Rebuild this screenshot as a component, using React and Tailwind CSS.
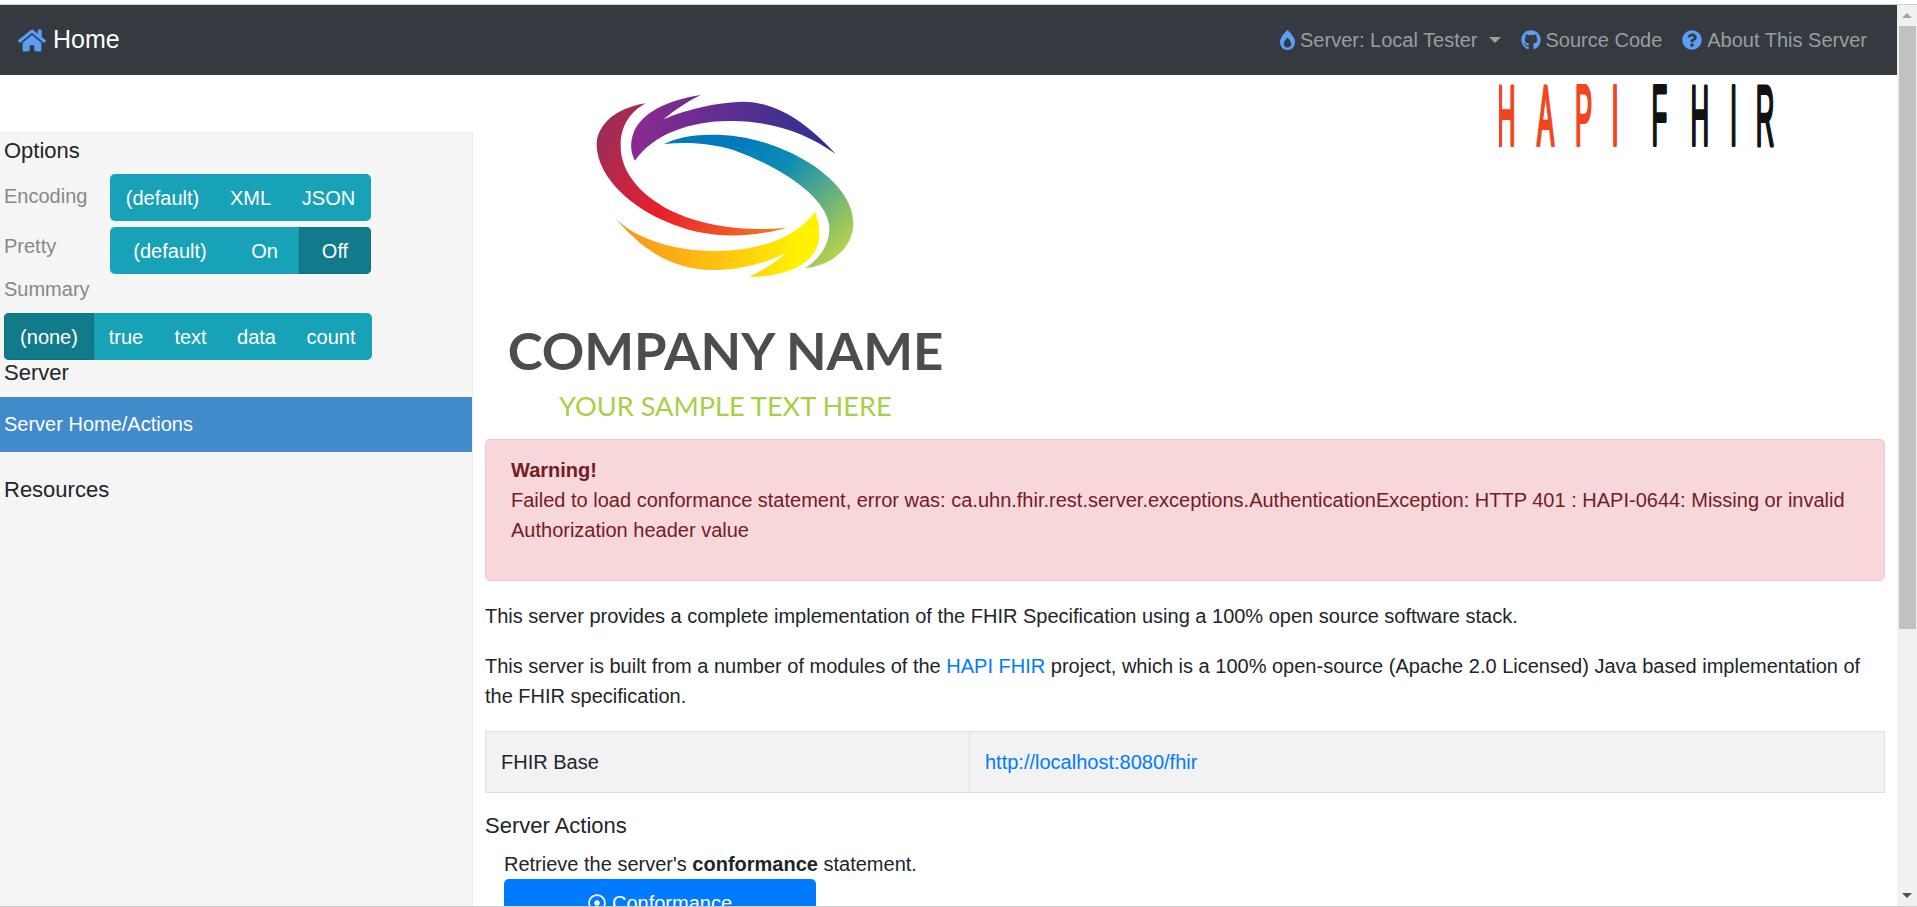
import { FaHome, FaBurn, FaGithub, FaQuestionCircle, FaRegDotCircle } from "react-icons/fa";

function Logo() {
  return (
    <svg width="475" height="364" viewBox="15 15 1425 1092" className="shrink-0">
      <defs>
        <linearGradient id="purple" gradientUnits="userSpaceOnUse" x1="470" y1="180" x2="1040" y2="200">
          <stop offset="0" stopColor="#8a2a91" />
          <stop offset="1" stopColor="#2e3192" />
        </linearGradient>
        <linearGradient id="red" gradientUnits="userSpaceOnUse" x1="370" y1="170" x2="900" y2="500">
          <stop offset="0" stopColor="#9d2c57" />
          <stop offset="0.45" stopColor="#e91f2b" />
          <stop offset="1" stopColor="#f57c20" />
        </linearGradient>
        <linearGradient id="yellow" gradientUnits="userSpaceOnUse" x1="420" y1="500" x2="960" y2="530">
          <stop offset="0" stopColor="#f7941d" />
          <stop offset="0.55" stopColor="#ffc20e" />
          <stop offset="1" stopColor="#fff200" />
        </linearGradient>
        <linearGradient id="teal" gradientUnits="userSpaceOnUse" x1="780" y1="190" x2="1110" y2="520">
          <stop offset="0" stopColor="#0079bf" />
          <stop offset="0.35" stopColor="#0c8cb5" />
          <stop offset="1" stopColor="#b7d24a" />
        </linearGradient>
      </defs>
      <path
        fill="url(#purple)"
        d="M465 272C450 245 450 215 462 185C485 130 560 90 663 75C620 95 585 120 550 148C600 125 700 97 790 95C900 97 990 170 1067 252C980 190 880 155 760 153C640 150 520 190 465 272Z"
      />
      <path
        fill="url(#red)"
        d="M497 100C400 115 350 170 350 225C352 330 470 420 560 455C650 495 770 515 920 473C800 485 680 470 590 430C490 385 420 310 422 225C422 170 450 125 497 100Z"
      />
      <path
        fill="url(#yellow)"
        d="M405 443C470 520 560 600 700 600C770 600 860 580 920 548C890 575 850 600 808 620C900 622 1020 590 1018 490C1018 465 1012 445 1005 425C960 490 860 540 720 543C590 545 470 510 405 443Z"
      />
      <path
        fill="url(#teal)"
        d="M552 222C620 185 760 185 860 220C1000 265 1120 360 1120 460C1120 530 1060 585 975 595C1030 560 1050 510 1048 470C1040 380 900 290 760 240C690 218 620 215 552 222Z"
      />
      <text
        x="83"
        y="900"
        fontFamily="Lato, sans-serif"
        fontWeight="700"
        fontSize="156"
        fill="#4d4d4f"
        textLength="1307"
        lengthAdjust="spacingAndGlyphs"
      >
        COMPANY NAME
      </text>
      <text
        x="237"
        y="1038"
        fontFamily="Lato, sans-serif"
        fontSize="80"
        fill="#a9cf46"
        textLength="998"
        lengthAdjust="spacingAndGlyphs"
      >
        YOUR SAMPLE TEXT HERE
      </text>
    </svg>
  );
}

function HapiLogo() {
  return (
    <svg width="386" height="90" viewBox="0 0 386 90" className="shrink-0">
      <g
        transform="scale(0.3 1)"
        fontFamily="Liberation Sans, sans-serif"
        fontSize="86"
        strokeWidth="3"
        strokeLinejoin="round"
      >
        <text x="-7 127 253 375" y="70" fill="#f2441d" stroke="#f2441d" vectorEffect="non-scaling-stroke">
          HAPI
        </text>
        <text x="508 638 770 856" y="70" fill="#111111" stroke="#111111" vectorEffect="non-scaling-stroke">
          FHIR
        </text>
      </g>
    </svg>
  );
}

function BtnGroup({ items, active }) {
  return (
    <div className="flex h-[47px] rounded-[5px] overflow-hidden bg-[#17a2b8] text-white text-[20px] leading-[30px]">
      {items.map((item) => (
        <div
          key={item.label}
          className={
            item.label === active
              ? `flex items-center justify-center bg-[#117a8b] border border-[#10707f] ${item.cls}`
              : `flex items-center justify-center ${item.cls}`
          }
        >
          {item.label}
        </div>
      ))}
    </div>
  );
}

function NavLink({ icon, children }) {
  return (
    <div className="flex items-center gap-[5px] px-[10px] text-[20px] text-[#9a9da0]">
      <span className="text-[#5a9ef8] text-[20px]">{icon}</span>
      {children}
    </div>
  );
}

function Sidebar() {
  return (
    <aside className="w-[473px] shrink-0 mt-[56px] bg-[#f5f5f5] border-r border-[#eeeeee] text-[#212529]">
      <div className="pl-1 text-[22px] leading-[33px] h-[43px] pt-[3px]">Options</div>
      <div className="flex pl-1 h-[53px]">
        <div className="w-[106px] text-[20px] leading-[30px] pt-[7px] text-[#888888]">Encoding</div>
        <div className="w-[261px]">
          <BtnGroup
            items={[
              { label: "(default)", cls: "w-[105px]" },
              { label: "XML", cls: "w-[71px]" },
              { label: "JSON", cls: "w-[85px]" },
            ]}
          />
        </div>
      </div>
      <div className="flex pl-1 h-[47px]">
        <div className="w-[106px] text-[20px] leading-[30px] pt-[4px] text-[#888888]">Pretty</div>
        <div className="w-[261px]">
          <BtnGroup
            active="Off"
            items={[
              { label: "(default)", cls: "w-[120px]" },
              { label: "On", cls: "w-[69px]" },
              { label: "Off", cls: "w-[72px]" },
            ]}
          />
        </div>
      </div>
      <div className="pl-1 text-[20px] leading-[30px] text-[#888888] mb-[9px]">Summary</div>
      <div className="pl-1 w-[372px]">
        <BtnGroup
          active="(none)"
          items={[
            { label: "(none)", cls: "w-[90px]" },
            { label: "true", cls: "w-[64px]" },
            { label: "text", cls: "w-[65px]" },
            { label: "data", cls: "w-[67px]" },
            { label: "count", cls: "w-[82px]" },
          ]}
        />
      </div>
      <div className="pl-1 text-[22px] leading-[26px] mb-[11px]">Server</div>
      <div className="h-[55px] flex items-center pl-1 pb-[2px] bg-[#428bca] text-white text-[20px]">Server Home/Actions</div>
      <div className="pl-1 mt-[21px] text-[22px] leading-[33px]">Resources</div>
    </aside>
  );
}

function Main() {
  return (
    <main className="flex-1 min-w-0 px-[12px] text-[20px] leading-[30px] text-[#212529]">
      <div className="flex justify-between h-[364px]">
        <Logo />
        <HapiLogo />
      </div>
      <div className="rounded-[5px] border border-[#f5c6cb] bg-[#f8d7da] text-[#721c24] px-[25px] py-[15px] mb-[20px]">
        <div className="font-bold">Warning!</div>
        <p className="mb-[20px]">
          Failed to load conformance statement, error was: ca.uhn.fhir.rest.server.exceptions.AuthenticationException:
          HTTP 401 : HAPI-0644: Missing or invalid Authorization header value
        </p>
      </div>
      <p className="mb-[20px]">
        This server provides a complete implementation of the FHIR Specification using a 100% open source software stack.
      </p>
      <p className="mb-[20px]">
        This server is built from a number of modules of the <span className="text-[#007bff]">HAPI FHIR</span> project,
        which is a 100% open-source (Apache 2.0 Licensed) Java based implementation of the FHIR specification.
      </p>
      <div className="flex h-[62px] border border-[#dee2e6] bg-[#f2f2f2] mb-[16px]">
        <div className="w-[484px] px-[15px] py-[15px] border-r border-[#dee2e6]">FHIR Base</div>
        <div className="flex-1 px-[15px] py-[15px] text-[#007bff]">http://localhost:8080/fhir</div>
      </div>
      <div className="text-[22px] leading-[33px] mb-[7px]">Server Actions</div>
      <div className="pl-[19px]">
        <div className="h-[30px]">
          Retrieve the server's <b>conformance</b> statement.
        </div>
        <div className="w-[312px] h-[47px] rounded-[5px] bg-[#007bff] text-white flex items-center justify-center gap-[6px]">
          <FaRegDotCircle className="text-[18px]" />
          Conformance
        </div>
      </div>
    </main>
  );
}

function ScrollBar() {
  return (
    <div className="w-[20px] shrink-0 bg-[#f1f1f1] flex flex-col items-start">
      <div className="h-[21px] w-[20px] flex items-center justify-center">
        <div className="w-0 h-0 border-x-[5px] border-x-transparent border-b-[5px] border-b-[#a3a3a3]" />
      </div>
      <div className="ml-[2px] w-[17px] h-[603px] bg-[#c1c1c1]" />
      <div className="mt-auto h-[21px] w-[20px] flex items-center justify-center">
        <div className="w-0 h-0 border-x-[5px] border-x-transparent border-t-[5px] border-t-[#505050]" />
      </div>
    </div>
  );
}

export default function App() {
  return (
    <div className="h-[907px] overflow-hidden flex flex-col bg-white font-['Liberation_Sans',Arial,sans-serif]">
      <div className="h-[4px] shrink-0 bg-white" />
      <div className="h-[1px] shrink-0 bg-[#cfcfcf]" />
      <div className="flex-1 min-h-0 flex">
        <div className="flex-1 min-w-0 flex flex-col">
          <nav className="h-[70px] shrink-0 bg-[#343a40] flex items-center pl-[18px] pr-[20px]">
            <FaHome className="text-[#5a9ef8] w-[28px] h-[25px]" />
            <span className="ml-[7px] text-white text-[25px]">Home</span>
            <div className="ml-auto flex items-center">
              <NavLink icon={<FaBurn className="w-[15px] h-[20px]" />}>
                Server: Local Tester
                <span className="ml-[6px] w-0 h-0 border-x-[6px] border-x-transparent border-t-[6px] border-t-[#9a9da0]" />
              </NavLink>
              <NavLink icon={<FaGithub />}>Source Code</NavLink>
              <NavLink icon={<FaQuestionCircle />}>About This Server</NavLink>
            </div>
          </nav>
          <div className="flex-1 min-h-0 flex overflow-hidden">
            <Sidebar />
            <Main />
          </div>
        </div>
        <ScrollBar />
      </div>
      <div className="h-[1px] shrink-0 bg-[#cfcfcf]" />
    </div>
  );
}
